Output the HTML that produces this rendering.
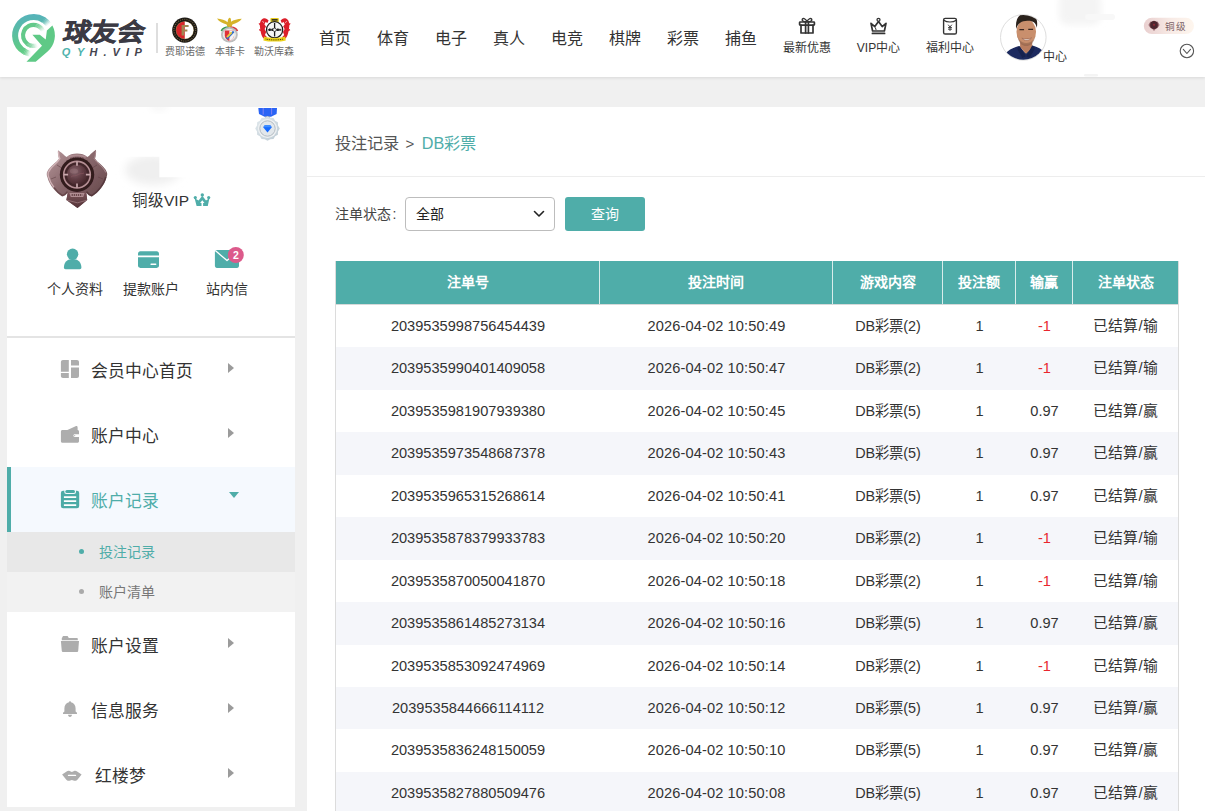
<!DOCTYPE html>
<html lang="zh-CN">
<head>
<meta charset="utf-8">
<title>投注记录</title>
<style>
*{box-sizing:border-box;margin:0;padding:0}
html,body{width:1205px;height:811px;overflow:hidden}
body{background:#f0f0f0;font-family:"Liberation Sans",sans-serif;color:#333;position:relative}
.abs{position:absolute}
.t{position:absolute;white-space:nowrap;line-height:1}
/* header */
#hdr{position:absolute;left:0;top:0;width:1205px;height:77px;background:#fff;box-shadow:0 1px 3px rgba(0,0,0,.10)}
.nav{position:absolute;top:28.5px;font-size:16px;line-height:20px;color:#333;white-space:nowrap;width:34px;text-align:center}
.hl{position:absolute;top:41px;font-size:12px;line-height:14px;color:#333;white-space:nowrap;width:80px;text-align:center}
.club{position:absolute;top:45.5px;font-size:10px;line-height:12px;color:#6a6a6a;white-space:nowrap;text-align:center;width:50px}
/* sidebar */
#side{position:absolute;left:7px;top:107px;width:288px;height:700px;background:#fff}
.q{position:absolute;top:173px;width:76px;text-align:center;font-size:14px;line-height:18px;color:#333;white-space:nowrap}
.mi{position:absolute;left:0;width:288px;height:65px}
.mi .lb{position:absolute;left:84px;top:23.5px;font-size:16.8px;line-height:22px;color:#333;white-space:nowrap}
.mi .ic{position:absolute;left:54px;top:23px;width:18px;height:18px}
.mi .ar{position:absolute;left:221px;top:25.5px;width:0;height:0;border-left:6.5px solid #9b9b9b;border-top:5.5px solid transparent;border-bottom:5.5px solid transparent}
.sub{position:absolute;left:0;width:288px;height:40px}
.sub .dot{position:absolute;left:72px;top:17px;width:5px;height:5px;border-radius:50%}
.sub .lb{position:absolute;left:91.5px;top:10.5px;font-size:14px;line-height:18px;white-space:nowrap}
/* main */
#main{position:absolute;left:307px;top:107px;width:898px;height:704px;background:#fff}
#tbl{position:absolute;left:28px;top:154px;width:844px;border-left:1px solid #dcdcdc;border-right:1px solid #dcdcdc}
.hr{height:44px;background:#4fada9;display:flex;border-bottom:1px solid #d6d9d9}
.hr div{color:#fff;font-weight:bold;font-size:14px;line-height:43px;text-align:center;border-right:1px solid #d9eceb}
.hr div:last-child{border-right:none}
.r{height:42.45px;display:flex;background:#fff}
.r.a{background:#f5f6fa}
.r div{font-size:14.6px;line-height:42.1px;text-align:center;color:#333;white-space:nowrap}
.c1{width:264px}.c2{width:233px}.c3{width:110px}.c4{width:73px}.c5{width:57px}.c6{width:105px}
.r .c2{letter-spacing:.12px}.r .c3{font-size:14.4px}.r .c6{font-size:14.8px}
.r .neg{color:#e8262d}
</style>
</head>
<body>
<!-- HEADER -->
<div id="hdr">
  <svg class="abs" style="left:0;top:0" width="1205" height="77" viewBox="0 0 1205 77">
  <defs>
    <linearGradient id="gRing" gradientUnits="userSpaceOnUse" x1="0" y1="15" x2="0" y2="50"><stop offset="0" stop-color="#56b3b9"/><stop offset=".5" stop-color="#5abda2"/><stop offset="1" stop-color="#60cb86"/></linearGradient>
    <linearGradient id="gPill" x1="0" y1="0" x2="1" y2="0"><stop offset="0" stop-color="#e9cfcf"/><stop offset=".55" stop-color="#f8ebe6"/><stop offset="1" stop-color="#fef6ee"/></linearGradient>
    <clipPath id="cAv"><circle cx="1023.3" cy="37.4" r="22.4"/></clipPath>
    <clipPath id="cF"><circle cx="184.8" cy="30.2" r="8.6"/></clipPath>
    <filter id="bl3" x="-50%" y="-50%" width="200%" height="200%"><feGaussianBlur stdDeviation="3"/></filter>
    <filter id="bl1" x="-50%" y="-50%" width="200%" height="200%"><feGaussianBlur stdDeviation=".6"/></filter>
  </defs>
  <!-- logo mark -->
  <g>
    <g fill="none" stroke="url(#gRing)" stroke-width="6"><path d="M43.58 19.88 A18.5 18.5 0 1 0 23.70 51.09"/><path d="M48.33 24.34 A18.5 18.5 0 0 0 47.40 23.19" stroke-opacity="0.15"/><path d="M47.53 23.34 A18.5 18.5 0 0 0 46.51 22.25" stroke-opacity="0.35"/><path d="M46.65 22.39 A18.5 18.5 0 0 0 45.56 21.37" stroke-opacity="0.59"/><path d="M45.71 21.50 A18.5 18.5 0 0 0 44.56 20.57" stroke-opacity="0.81"/><path d="M44.71 20.68 A18.5 18.5 0 0 0 43.49 19.83" stroke-opacity="0.96"/><path d="M43.66 19.94 A18.5 18.5 0 0 0 43.22 19.66" stroke-opacity="1.00"/><path d="M23.34 50.86 A18.5 18.5 0 0 0 24.62 51.63" stroke-opacity="0.98"/><path d="M24.45 51.53 A18.5 18.5 0 0 0 25.77 52.21" stroke-opacity="0.86"/><path d="M25.59 52.13 A18.5 18.5 0 0 0 26.96 52.71" stroke-opacity="0.67"/><path d="M26.78 52.64 A18.5 18.5 0 0 0 28.18 53.12" stroke-opacity="0.44"/><path d="M28.00 53.06 A18.5 18.5 0 0 0 29.43 53.45" stroke-opacity="0.23"/><path d="M29.24 53.40 A18.5 18.5 0 0 0 30.70 53.69" stroke-opacity="0.06"/></g>
    <g fill="none" stroke="#62c98a" stroke-width="4.2"><path d="M35.86 25.17 A10.5 10.5 0 0 0 27.33 43.89"/><path d="M42.96 30.85 A10.5 10.5 0 0 0 42.57 30.10" stroke-opacity="0.07"/><path d="M42.62 30.20 A10.5 10.5 0 0 0 42.17 29.48" stroke-opacity="0.14"/><path d="M42.24 29.57 A10.5 10.5 0 0 0 41.74 28.89" stroke-opacity="0.22"/><path d="M41.81 28.98 A10.5 10.5 0 0 0 41.27 28.33" stroke-opacity="0.30"/><path d="M41.34 28.42 A10.5 10.5 0 0 0 40.75 27.81" stroke-opacity="0.40"/><path d="M40.83 27.89 A10.5 10.5 0 0 0 40.21 27.32" stroke-opacity="0.50"/><path d="M40.29 27.39 A10.5 10.5 0 0 0 39.63 26.87" stroke-opacity="0.60"/><path d="M39.72 26.94 A10.5 10.5 0 0 0 39.02 26.47" stroke-opacity="0.70"/><path d="M39.11 26.52 A10.5 10.5 0 0 0 38.38 26.10" stroke-opacity="0.78"/><path d="M38.48 26.15 A10.5 10.5 0 0 0 37.72 25.79" stroke-opacity="0.86"/><path d="M37.82 25.83 A10.5 10.5 0 0 0 37.04 25.51" stroke-opacity="0.93"/><path d="M37.14 25.55 A10.5 10.5 0 0 0 36.34 25.29" stroke-opacity="0.97"/><path d="M36.45 25.32 A10.5 10.5 0 0 0 35.63 25.12" stroke-opacity="1.00"/><path d="M27.14 43.75 A10.5 10.5 0 0 0 27.83 44.24" stroke-opacity="1.00"/><path d="M27.74 44.18 A10.5 10.5 0 0 0 28.46 44.61" stroke-opacity="0.98"/><path d="M28.36 44.56 A10.5 10.5 0 0 0 29.11 44.94" stroke-opacity="0.93"/><path d="M29.01 44.89 A10.5 10.5 0 0 0 29.79 45.22" stroke-opacity="0.88"/><path d="M29.69 45.18 A10.5 10.5 0 0 0 30.48 45.46" stroke-opacity="0.81"/><path d="M30.38 45.42 A10.5 10.5 0 0 0 31.19 45.64" stroke-opacity="0.73"/><path d="M31.08 45.62 A10.5 10.5 0 0 0 31.91 45.78" stroke-opacity="0.64"/><path d="M31.80 45.76 A10.5 10.5 0 0 0 32.64 45.86" stroke-opacity="0.55"/><path d="M32.53 45.86 A10.5 10.5 0 0 0 33.37 45.90" stroke-opacity="0.45"/><path d="M33.26 45.90 A10.5 10.5 0 0 0 34.10 45.88" stroke-opacity="0.36"/><path d="M33.99 45.89 A10.5 10.5 0 0 0 34.83 45.81" stroke-opacity="0.27"/><path d="M34.73 45.83 A10.5 10.5 0 0 0 35.56 45.70" stroke-opacity="0.19"/><path d="M35.45 45.72 A10.5 10.5 0 0 0 36.27 45.53" stroke-opacity="0.12"/><path d="M36.16 45.56 A10.5 10.5 0 0 0 36.97 45.31" stroke-opacity="0.07"/></g>
    <path d="M52.4 25.4 L46.9 30.4 L45.7 39.6 L39.8 34.8 L32.4 34.8 L42 45.7 L26.5 61.7 L35.7 61.7 L47.6 51.6 A21.5 21.5 0 0 0 52.4 25.4 Z" fill="#5fc986"/>
  </g>
  <!-- word mark -->
  <g transform="translate(62 0) skewX(-12)">
    <text x="8.6" y="41" font-family="Liberation Sans, sans-serif" font-weight="900" font-size="25" fill="#3b3a44" stroke="#3b3a44" stroke-width=".55" textLength="80.5" lengthAdjust="spacingAndGlyphs">球友会</text>
  </g>
  <g font-family="Liberation Sans, sans-serif" font-weight="bold" font-style="italic" font-size="11" fill="#45444f">
    <text x="61.8" y="56" fill="#4fb3ad">Q</text><text x="77" y="56" fill="#4fb3ad">Y</text><text x="89.4" y="56">H</text><text x="103.6" y="56">.</text><text x="112.6" y="56">V</text><text x="126" y="56">I</text><text x="134.4" y="56">P</text>
  </g>
  <!-- club 1 -->
  <g>
    <circle cx="184.8" cy="30.2" r="12.6" fill="#1b1814"/>
    <circle cx="184.8" cy="30.2" r="10.9" fill="none" stroke="#8f7a4c" stroke-width="1.3" stroke-dasharray=".9 1.3" opacity=".75"/>
    <circle cx="184.8" cy="30.2" r="9" fill="#9c8856"/>
    <g clip-path="url(#cF)"><rect x="175" y="20" width="9.8" height="21" fill="#d8262b"/><rect x="184.8" y="20" width="10" height="21" fill="#fff"/></g>
    <path d="M181.6 25 H188.6 V27 H184 V29.6 H187.4 V31.4 H184 V35.6 H181.6 Z" fill="#a08652"/>
  </g>
  <!-- club 2 -->
  <g>
    <path d="M217 18.6 C221 19 225.5 20 227.6 22.2 C227.8 20 228.4 18.2 229.6 17.8 C230.8 18 231.2 19.4 231 21.8 C233.4 20 237.6 19 241.8 18.8 C240 21.6 236 23.4 232.4 24.6 L231.4 27.2 L227.6 27.2 L226.6 24.6 C223 23.6 219 21.8 217 18.6 Z" fill="#d6b32a"/>
    <path d="M220.6 30.4 C223 26.6 227 25.8 229.4 27.2 L229.4 29.4 C226.6 28.6 223.6 29.6 222 31.6 Z" fill="#2f9a4c"/>
    <path d="M238.2 30.4 C235.8 26.6 231.8 25.8 229.4 27.2 L229.4 29.4 C232.2 28.6 235.2 29.6 236.8 31.6 Z" fill="#d9333a"/>
    <ellipse cx="229.4" cy="34.8" rx="8.4" ry="7.8" fill="#bdbdbd"/>
    <ellipse cx="229.4" cy="34.8" rx="6.6" ry="6.1" fill="#e9e9e9"/>
    <path d="M224.8 30.6 H234 V35.6 C234 38.6 231.6 40.2 229.4 41 C227.2 40.2 224.8 38.6 224.8 35.6 Z" fill="#e03038"/>
    <path d="M229.4 30.6 H234 V35.6 C234 38.6 231.6 40.2 229.4 41 Z" fill="#f4f4f4"/>
    <path d="M233 30.8 L234.4 32.2 L227.4 39.4 L226 38 Z" fill="#2a6ad0"/>
    <path d="M231 31.6 L232.4 33 L227.6 37.8 L226.4 36.6 Z" fill="#ecc83a"/>
  </g>
  <!-- club 3 -->
  <g>
    <path d="M260 27 C259.4 23 260.6 19.4 263.2 18.4 C265.4 17.8 267.4 18.8 268.6 20.6 L267.4 23 L265.6 22 L264.4 24.2 L266 26.4 L264.6 29 L266.2 32 L265 35 L267.4 37.6 L263.6 38.4 C261.6 36.4 260.4 31.6 260 27 Z" fill="#dc1f2b"/>
    <path d="M289.2 27 C289.8 23 288.6 19.4 286 18.4 C283.8 17.8 281.8 18.8 280.6 20.6 L281.8 23 L283.6 22 L284.8 24.2 L283.2 26.4 L284.6 29 L283 32 L284.2 35 L281.8 37.6 L285.6 38.4 C287.6 36.4 288.8 31.6 289.2 27 Z" fill="#dc1f2b"/>
    <path d="M259 23.4 L261.4 25.8 M259.2 29.6 L261.6 30.6 M290.2 23.4 L287.8 25.8 M290 29.6 L287.6 30.6" stroke="#dc1f2b" stroke-width="1.2"/>
    <path d="M262.4 21.4 L264 22.6 M286.8 21.4 L285.2 22.6" stroke="#fff" stroke-width=".7"/>
    <rect x="270.4" y="18" width="8.4" height="4" rx=".8" fill="#e8cd1e"/>
    <rect x="271.6" y="19.1" width="6" height="1.5" fill="#2a2a2a"/>
    <circle cx="274.6" cy="29.8" r="8.7" fill="#1b1b1b"/>
    <circle cx="274.6" cy="29.8" r="7.5" fill="#f6f6f6"/>
    <path d="M274.6 23 V36.6 M267.8 29.8 H281.4" stroke="#1b1b1b" stroke-width="1.3"/>
    <path d="M269 29.8 H280.2" stroke="#1b1b1b" stroke-width="2.6" stroke-dasharray="1.6 1.1"/>
    <circle cx="274.6" cy="29.8" r="1.7" fill="#f6f6f6" stroke="#1b1b1b" stroke-width=".7"/>
    <path d="M264 36.6 C268 38.4 281.2 38.4 285.2 36.6 L285.8 40.4 C281 42 268.2 42 263.4 40.4 Z" fill="#ecd21c"/>
    <path d="M265.6 39 C270 40.2 279.2 40.2 283.6 39" stroke="#4a4208" stroke-width="1" fill="none" stroke-dasharray="1 .8"/>
  </g>
  <!-- gift -->
  <g fill="none" stroke="#333" stroke-width="1.7" stroke-linejoin="round" stroke-linecap="round">
    <rect x="799.6" y="22" width="14.8" height="3.2" rx=".6"/>
    <path d="M801 25.2 V33 H813 V25.2"/>
    <path d="M805.6 22 V33 M808.4 22 V33"/>
    <path d="M807 21.6 C805.4 18.2 802.6 17.8 802.2 19.6 C801.8 21.4 804.6 21.8 807 21.6 C809.4 21.8 812.2 21.4 811.8 19.6 C811.4 17.8 808.6 18.2 807 21.6 Z" stroke-width="1.4"/>
  </g>
  <!-- crown -->
  <g fill="none" stroke="#333" stroke-width="1.7" stroke-linejoin="round" stroke-linecap="round">
    <circle cx="878.5" cy="19.8" r="1.5" stroke-width="1.3"/>
    <path d="M871 23.4 L874.8 26.6 L878.5 21.6 L882.2 26.6 L886 23.4 L884.4 31 H872.6 Z"/>
    <path d="M872.4 33.4 H884.6" stroke-width="1.7"/>
    <path d="M875.4 27.8 L876 29.6" stroke-width="1"/>
  </g>
  <!-- red packet -->
  <g fill="none" stroke="#333" stroke-width="1.4" stroke-linejoin="round" stroke-linecap="round">
    <rect x="943.6" y="18.4" width="12.8" height="15.6" rx="1.6"/>
    <path d="M943.8 20.2 C947 22.6 953 22.6 956.2 20.2" stroke-width="1.2"/>
    <path d="M948.4 25 L950 27 L951.6 25 M950 27 V30.6 M948.4 27.6 H951.6 M948.4 29.2 H951.6" stroke-width=".9"/>
  </g>
  <!-- blurred name blob -->
  <rect x="1059" y="-8" width="42" height="33" rx="9" fill="#f4f4f4" filter="url(#bl3)"/><rect x="1085" y="14" width="30" height="6" rx="3" fill="#f8f8f8" filter="url(#bl1)"/>
  <rect x="1084" y="74" width="14" height="2.5" rx="1.2" fill="#f4f4f4" filter="url(#bl1)"/>
  <!-- avatar -->
  <g>
    <circle cx="1023.3" cy="37.4" r="22.8" fill="#fff" stroke="#dedede" stroke-width="1"/>
    <g clip-path="url(#cAv)" filter="url(#bl1)"><g transform="translate(1025.6 38.4) scale(1.1) translate(-1025 -37.6)">
      <path d="M1002 66 C1003 52 1009 47.4 1019 44.6 L1025 51 L1031 44 C1040 46.4 1046 51 1048 66 Z" fill="#1f2c5e"/>
      <path d="M1020 38 H1031 V46 L1025.4 51.5 L1020 45.6 Z" fill="#b97d5e"/>
      <path d="M1019.6 44.4 L1025.4 54 L1022 55.4 L1017.2 47 Z M1031 44 L1025.4 54 L1028.8 55.4 L1033.6 46.6 Z" fill="#182350"/>
      <ellipse cx="1025.6" cy="31.6" rx="8.9" ry="11.4" fill="#c98f6d"/>
      <path d="M1016.4 29 C1015.4 20 1019 14.4 1026.4 14.4 C1033.6 14.4 1036.6 19.4 1035.2 28 C1034.4 23.6 1032 21.4 1026.6 21.6 C1021.4 21.8 1018 23.6 1016.4 29 Z" fill="#2b211d"/>
      <path d="M1019.4 29.6 H1023.6 M1027.4 29.4 H1031.8" stroke="#3a2820" stroke-width="1.1"/>
      <path d="M1021.6 37.4 C1024 40 1028 40 1030.4 37.2 C1028 38.2 1024 38.4 1021.6 37.4 Z" fill="#f3ebe6" stroke="#8d5540" stroke-width=".5"/>
      <path d="M1017.4 34 C1018 41 1021.4 44.4 1025.6 44.6 C1029.8 44.4 1033.2 41 1034 34 C1033.4 38.6 1030.6 41.6 1025.6 41.8 C1020.8 41.6 1018.2 38.6 1017.4 34 Z" fill="#8b5e49" opacity=".55"/>
    </g></g>
  </g>
  <!-- level pill -->
  <rect x="1143.8" y="17.8" width="50.2" height="16.3" rx="8.15" fill="url(#gPill)"/>
  <g filter="url(#bl1)">
    <path d="M1148.4 25 L1150.4 21.6 L1152 22 L1154 20.6 L1156 22 L1157.6 21.6 L1159.6 25 L1157.6 28 L1156 28.6 L1154 31 L1152 28.6 L1150.4 28 Z" fill="#9c6e75"/>
    <circle cx="1154" cy="25" r="3.9" fill="#4e262d"/>
    <circle cx="1154" cy="24.8" r="1.1" fill="#8c2a36"/>
  </g>
  <text x="1165.2" y="29.6" font-family="Liberation Sans, sans-serif" font-size="9.6" fill="#7a6064" letter-spacing=".9">铜级</text>
  <!-- chevron circle -->
  <circle cx="1186.9" cy="51" r="6.7" fill="none" stroke="#555" stroke-width="1.1"/>
  <path d="M1183.3 49.4 L1186.9 53.5 L1190.5 49.4" fill="none" stroke="#555" stroke-width="1.1" stroke-linecap="round" stroke-linejoin="round"/>
</svg>
  <div class="abs" style="left:156px;top:23px;width:1.5px;height:30px;background:#dedede"></div>
  <div class="club" style="left:160px">费耶诺德</div>
  <div class="club" style="left:204.5px">本菲卡</div>
  <div class="club" style="left:249px">勒沃库森</div>

  <div class="nav" style="left:318px">首页</div>
  <div class="nav" style="left:376px">体育</div>
  <div class="nav" style="left:434px">电子</div>
  <div class="nav" style="left:492px">真人</div>
  <div class="nav" style="left:550px">电竞</div>
  <div class="nav" style="left:608px">棋牌</div>
  <div class="nav" style="left:666px">彩票</div>
  <div class="nav" style="left:724px">捕鱼</div>

  <div class="hl" style="left:767px">最新优惠</div>
  <div class="hl" style="left:838.5px">VIP中心</div>
  <div class="hl" style="left:910px">福利中心</div>

  <div class="t" style="left:1043px;top:50.5px;font-size:12px;color:#333">中心</div>
</div>

<!-- SIDEBAR -->
<div id="side">
  <div class="t" style="left:125px;top:84.5px;font-size:15.5px;line-height:18px;color:#333">铜级VIP</div>
  <div class="q" style="left:30px">个人资料</div>
  <div class="q" style="left:106px">提款账户</div>
  <div class="q" style="left:182px">站内信</div>
  <div class="abs" style="left:0;top:229px;width:288px;height:1.5px;background:#e4e4e4"></div>

  <div class="mi" style="top:230px"><div class="lb">会员中心首页</div><div class="ar"></div></div>
  <div class="mi" style="top:295px"><div class="lb">账户中心</div><div class="ar"></div></div>
  <div class="mi" style="top:360px;background:#f5f9fe"><div class="abs" style="left:0;top:0;width:4px;height:65px;background:#4fada9"></div><div class="lb" style="color:#4fada9">账户记录</div>
    <div class="abs" style="left:221.5px;top:25px;width:0;height:0;border-top:6px solid #4fada9;border-left:5.5px solid transparent;border-right:5.5px solid transparent"></div></div>
  <div class="sub" style="top:425px;background:#e8e8e8"><div class="dot" style="background:#4fada9"></div><div class="lb" style="color:#4fada9">投注记录</div></div>
  <div class="sub" style="top:465px;background:#f2f2f2"><div class="dot" style="background:#aaa"></div><div class="lb" style="color:#777">账户清单</div></div>
  <div class="mi" style="top:505px"><div class="lb">账户设置</div><div class="ar"></div></div>
  <div class="mi" style="top:570px"><div class="lb">信息服务</div><div class="ar"></div></div>
  <div class="mi" style="top:635px"><div class="lb" style="left:88px">红楼梦</div><div class="ar"></div></div>
<svg class="abs" style="left:0;top:0" width="288" height="700" viewBox="0 0 288 700">
  <defs>
    <linearGradient id="gEm" x1="0" y1="0" x2="1" y2="1"><stop offset="0" stop-color="#bb9ca0"/><stop offset=".4" stop-color="#8b6a6e"/><stop offset="1" stop-color="#5d3f43"/></linearGradient>
    <linearGradient id="gEm2" x1="0" y1="0" x2="0" y2="1"><stop offset="0" stop-color="#7a5258"/><stop offset="1" stop-color="#523237"/></linearGradient>
    <radialGradient id="gOrb" cx=".4" cy=".35" r=".7"><stop offset="0" stop-color="#84626a"/><stop offset=".55" stop-color="#613d44"/><stop offset="1" stop-color="#45262b"/></radialGradient>
    <linearGradient id="gMed" x1="0" y1="0" x2="1" y2="1"><stop offset="0" stop-color="#e3eaee"/><stop offset="1" stop-color="#bccad3"/></linearGradient>
    <filter id="sb4" x="-50%" y="-50%" width="200%" height="200%"><feGaussianBlur stdDeviation="4"/></filter>
    <filter id="sb05" x="-20%" y="-20%" width="140%" height="140%"><feGaussianBlur stdDeviation=".45"/></filter>
  </defs>
  <!-- blurred name -->
  <clipPath id="cBlob"><path d="M100 49.8 H152.3 V70.2 H195 V95 H100 Z"/></clipPath>
  <g clip-path="url(#cBlob)"><ellipse cx="146" cy="63" rx="28" ry="15" fill="#efefef" filter="url(#sb4)"/></g>
  <rect x="144" y="-5" width="16" height="8" rx="4" fill="#f5f5f5" filter="url(#sb4)"/>
  <!-- medal -->
  <g>
    <path d="M251.3 1 H270 L269.6 7 L264 9.8 H257.6 L252 7 Z" fill="#2a64f5"/>
    <path d="M256.2 1 V7.6 M264.6 1 V7.6" stroke="#8a86f2" stroke-width=".9"/>
    <rect x="258.2" y="9.4" width="4.6" height="1.6" fill="#9aa0a6"/>
    <path id="st" d="M260.5 9.2 L263.3 10.8 L266.5 10.9 L268.1 13.7 L270.9 15.3 L271 18.5 L272.8 21.5 L271 24.5 L270.9 27.7 L268.1 29.3 L266.5 32.1 L263.3 32.2 L260.5 33.8 L257.7 32.2 L254.5 32.1 L252.9 29.3 L250.1 27.7 L250 24.5 L248.2 21.5 L250 18.5 L250.1 15.3 L252.9 13.7 L254.5 10.9 L257.7 10.8 Z" fill="url(#gMed)"/>
    <circle cx="260.5" cy="21.5" r="9.6" fill="#eef1f3"/>
    <circle cx="260.5" cy="21.5" r="7.7" fill="#e2e7eb" stroke="#b4bcc3" stroke-width="1"/>
    <path d="M258 18 H263 L264.8 20.2 L260.5 25.4 L256.2 20.2 Z" fill="#166aff"/>
    <path d="M258 18 H263 L264.8 20.2 H256.2 Z" fill="#3f8dff"/>
  </g>
  <!-- bronze emblem -->
  <g filter="url(#sb05)">
    <path d="M51 43.2 C53.2 44.6 56 46.4 57.8 48.8 L59.6 50 C62 47.6 66 46.5 70 46.5 C74 46.5 78 47.6 80.4 50 L82.2 48.8 C84 46.4 86.8 44.4 89 42.7 C89.4 46 88.8 49.4 88 51.4 C89.4 53.4 90.8 55 92.2 56.1 C95.6 59 98.6 62 100 65.4 C100.4 67 100.2 68.6 99.6 70 C98.6 74.4 96.4 78 94 81.1 C91.4 84.6 88.2 87.6 84.8 89.4 C82.6 89 80.6 87.6 79.3 85.7 L80.2 93.1 L70.5 101 L59.4 93.1 L60.7 85.7 C59.4 87.6 57.4 89 55.2 89.4 C51.8 87.6 48.6 84.6 46 81.1 C43.6 78 41.4 74.4 40.4 70 C39.8 68.6 39.6 67 39.9 65.4 C41.4 62 44.4 59 47.8 56.1 C49.2 55 50.6 53.4 52 51.4 C51.2 49.4 50.6 46 51 43.2 Z" fill="url(#gEm)"/>
    <path d="M51.5 44.6 C51.4 47.6 52 50 52.8 51.6 C51.6 53.6 50 55.4 48.4 56.8 C45.2 59.4 42.6 62.4 41.2 65.6 C40.8 67.4 41.2 69 41.8 70.4 C42.8 74 44.6 77.4 47 80.4" fill="none" stroke="#d9bcc0" stroke-width="1.3" opacity=".85"/>
    <path d="M88.5 44.4 C88.6 47.6 88 50 87.2 51.6 C88.4 53.6 90 55.4 91.6 56.8 C94.8 59.4 97.4 62.4 98.8 65.6" fill="none" stroke="#b99a9e" stroke-width="1" opacity=".7"/>
    <path d="M98.8 70 C97.6 74.6 95.6 78 93.4 80.8 C91 84 88 86.8 84.8 88.6 C83 88 81 86.6 79.6 84.6" fill="none" stroke="#4f3135" stroke-width="1.6" opacity=".75"/>
    <path d="M47 80.6 C49.4 83.8 52.2 86.6 55.2 88.4 C57 88 59 86.6 60.4 84.6" fill="none" stroke="#5a3a3e" stroke-width="1.4" opacity=".7"/>
    <path d="M44 72 L49 70 M96 72 L91 70 M50 58 L54 60.5 M90 58 L86 60.5" stroke="#5f4044" stroke-width="1" opacity=".55"/>
    <path d="M59.4 93.1 L60.7 85.7 H79.3 L80.2 93.1 L70.5 101 Z" fill="url(#gEm2)"/>
    <path d="M60 93.2 L70.5 95.8 L80 93.2" fill="none" stroke="#a8868a" stroke-width=".9" opacity=".7"/>
    <path d="M62.4 85.9 H77.6 L76.2 90 H63.8 Z" fill="#b08d92"/>
    <path d="M64.6 88 H75.4" stroke="#553539" stroke-width="1.7" stroke-dasharray="1.3 .8"/>
    <path d="M61.2 50.2 C65 47.8 75 47.8 78.8 50.2" fill="none" stroke="#ad8b90" stroke-width="1.8"/>
    <path d="M63 51.6 C66.4 49.8 73.6 49.8 77 51.6" fill="none" stroke="#5a3b3f" stroke-width="1" stroke-dasharray="1 .7" opacity=".8"/>
    <circle cx="70" cy="67.7" r="17.2" fill="#331a1e"/>
    <circle cx="70" cy="67.7" r="13.3" fill="#43262b" stroke="#b58f94" stroke-width="1.6"/>
    <circle cx="70" cy="67.7" r="10.2" fill="url(#gOrb)"/>
    <path d="M70 54.6 V58.8 M70 76.6 V80.8 M56.9 67.7 H61.1 M78.9 67.7 H83.1" stroke="#c9a9ad" stroke-width="1.7"/>
    <ellipse cx="67" cy="64" rx="4.2" ry="2.6" fill="#a07c81" opacity=".4"/>
    <path d="M64 70 C66 68 69 69.6 71.6 67.4 C73.6 66 75.6 67 77 66" fill="none" stroke="#8d5a63" stroke-width=".9" opacity=".6"/>
  </g>
  <!-- teal crown -->
  <g fill="#4fada9">
    <circle cx="188.3" cy="90.6" r="1.6"/><circle cx="195.3" cy="87.9" r="1.7"/><circle cx="201.7" cy="90.6" r="1.6"/>
    <path d="M187.6 91.2 L191.6 93.6 L195.3 88.8 L199 93.6 L202.4 91.2 L200.8 98.9 H189.6 Z"/>
    <path d="M195.3 93.2 L197.5 95.9 H196.1 V98.9 H194.5 V95.9 H193.1 Z" fill="#fff"/>
  </g>
  <!-- person -->
  <g fill="#4fada9">
    <circle cx="65.6" cy="147.2" r="5.7"/>
    <path d="M56.9 160.6 C56.9 155.2 60.4 151.9 65.6 151.9 C70.8 151.9 74.4 155.2 74.4 160.6 C74.4 161.6 73.7 162.3 72.7 162.3 H58.6 C57.6 162.3 56.9 161.6 56.9 160.6 Z"/>
  </g>
  <!-- card -->
  <g fill="#4fada9">
    <path d="M131 148.4 V146.6 C131 145.3 132 144.3 133.3 144.3 H149.7 C151 144.3 152 145.3 152 146.6 V148.4 Z"/>
    <path d="M131 150.3 H152 V158.6 C152 159.9 151 160.9 149.7 160.9 H133.3 C132 160.9 131 159.9 131 158.6 Z"/>
    <rect x="143.4" y="156.6" width="6" height="1.4" rx=".7" fill="#fff"/>
  </g>
  <!-- envelope -->
  <g>
    <rect x="207.9" y="143" width="24.1" height="17.9" rx="1.8" fill="#4fada9"/>
    <path d="M208.3 143.6 L220 153.6 L231.7 143.6" fill="none" stroke="#fff" stroke-width="1.3" stroke-linejoin="round"/>
    <circle cx="228.8" cy="148" r="8" fill="#dc5a8b"/>
    <text x="228.8" y="151.8" text-anchor="middle" font-family="Liberation Sans, sans-serif" font-weight="bold" font-size="10.5" fill="#fff">2</text>
  </g>
  <!-- grid icon -->
  <g fill="#adadad">
    <path d="M55.9 252.9 H61.8 V264.7 H53.9 V254.9 C53.9 253.8 54.8 252.9 55.9 252.9 Z"/>
    <path d="M53.9 266 H61.8 V271.1 H55.9 C54.8 271.1 53.9 270.2 53.9 269.1 Z"/>
    <path d="M64 252.9 H70 C71.1 252.9 72 253.8 72 254.9 V258.6 H64 Z"/>
    <path d="M64 260.4 H72 V269.1 C72 270.2 71.1 271.1 70 271.1 H64 Z"/>
  </g>
  <!-- wallet -->
  <g fill="#adadad">
    <path d="M55.4 322.9 H70.5 C71.3 322.9 72 323.6 72 324.4 V327.2 H67.6 C66.9 327.2 66.4 327.8 66.4 328.5 C66.4 329.3 66.9 329.9 67.6 329.9 H72 V334.2 C72 335 71.3 335.7 70.5 335.7 H55.4 C54.6 335.7 53.9 335 53.9 334.2 V324.4 C53.9 323.6 54.6 322.9 55.4 322.9 Z"/>
    <path d="M60.4 322.9 L68.6 319.2 C69.6 318.8 70.6 319.4 70.6 320.4 V322.9 Z"/>
    <circle cx="67.7" cy="328.55" r=".6"/>
  </g>
  <!-- clipboard -->
  <g>
    <rect x="53.9" y="383.85" width="18.3" height="17.3" rx="2.2" fill="#4caba6"/>
    <rect x="57.3" y="382.1" width="11.7" height="4.8" rx="2" fill="#f5f9fe"/>
    <rect x="58.3" y="382.9" width="9.7" height="3.2" rx="1.5" fill="#4caba6"/>
    <path d="M56.9 390.15 H69.2 M56.9 394.1 H69.2 M56.9 398.05 H69.2" stroke="#fff" stroke-width="1.75"/>
  </g>
  <!-- folder -->
  <g fill="#adadad">
    <path d="M55.6 529.9 C55.6 529.3 56 528.9 56.6 528.9 H60.6 L61.8 531 H69.8 C70.4 531 70.8 531.4 70.8 532 V533.3 H54.8 V531 Z"/>
    <path d="M53.9 533.9 H72 L71.2 544 C71.1 544.6 70.7 544.9 70.2 544.9 H55.8 C55.3 544.9 54.9 544.6 54.8 544 Z"/>
  </g>
  <!-- bell -->
  <g fill="#adadad">
    <path d="M63 594.2 C63.7 594.2 64 594.7 64 595.3 C67 596 68.6 598.4 68.6 601.6 V604.4 L70 605.8 V607 H56 V605.8 L57.4 604.4 V601.6 C57.4 598.4 59 596 62 595.3 C62 594.7 62.3 594.2 63 594.2 Z"/>
    <path d="M61 607.8 H65 C65 609 64.1 609.9 63 609.9 C61.9 609.9 61 609 61 607.8 Z"/>
  </g>
  <!-- lips -->
  <g>
    <path d="M55.1 667.5 L59.6 664.6 C60.4 663.9 61.6 663.6 62.6 664 L64.85 665 L67.1 664 C68.1 663.6 69.3 663.9 70.1 664.6 L74.6 667.5 L70.6 672.6 C69.8 673.6 68.4 674.1 67.2 673.7 L64.85 673 L62.5 673.7 C61.3 674.1 59.9 673.6 59.1 672.6 Z" fill="#adadad"/>
    <rect x="60.8" y="667.7" width="8.4" height="1.4" rx=".7" fill="#fff"/>
  </g>
</svg>
</div>

<!-- MAIN -->
<div id="main">
  <div class="t" style="left:28px;top:25.5px;font-size:16.2px;line-height:20px;color:#555">投注记录 <span style="font-size:15px;margin:0 3px 0 2px">&gt;</span> <span style="color:#4fada9">DB彩票</span></div>
  <div class="abs" style="left:0;top:69px;width:898px;height:1px;background:#ededed"></div>
  <div class="t" style="left:28px;top:98px;font-size:14px;line-height:18px;color:#444">注单状态<span style="margin-left:1.5px">:</span></div>
  <div class="abs" style="left:98px;top:90px;width:150px;height:34px;border:1px solid #bdbdbd;border-radius:4px;background:#fff">
    <div class="t" style="left:10px;top:7px;font-size:14px;line-height:18px;color:#222">全部</div>
    <svg class="abs" style="left:127px;top:12px" width="12" height="8" viewBox="0 0 12 8"><path d="M1.5 1.5 L6 6 L10.5 1.5" fill="none" stroke="#222" stroke-width="1.6" stroke-linecap="round" stroke-linejoin="round"/></svg>
  </div>
  <div class="abs" style="left:258px;top:90px;width:80px;height:34px;border-radius:3px;background:#4fada9;color:#fff;font-size:14px;line-height:34px;text-align:center">查询</div>

  <div id="tbl">
    <div class="hr"><div class="c1">注单号</div><div class="c2">投注时间</div><div class="c3">游戏内容</div><div class="c4">投注额</div><div class="c5">输赢</div><div class="c6">注单状态</div></div>
    <div class="r"><div class="c1">2039535998756454439</div><div class="c2">2026-04-02 10:50:49</div><div class="c3">DB彩票(2)</div><div class="c4">1</div><div class="c5 neg">-1</div><div class="c6">已结算/输</div></div>
    <div class="r a"><div class="c1">2039535990401409058</div><div class="c2">2026-04-02 10:50:47</div><div class="c3">DB彩票(2)</div><div class="c4">1</div><div class="c5 neg">-1</div><div class="c6">已结算/输</div></div>
    <div class="r"><div class="c1">2039535981907939380</div><div class="c2">2026-04-02 10:50:45</div><div class="c3">DB彩票(5)</div><div class="c4">1</div><div class="c5">0.97</div><div class="c6">已结算/赢</div></div>
    <div class="r a"><div class="c1">2039535973548687378</div><div class="c2">2026-04-02 10:50:43</div><div class="c3">DB彩票(5)</div><div class="c4">1</div><div class="c5">0.97</div><div class="c6">已结算/赢</div></div>
    <div class="r"><div class="c1">2039535965315268614</div><div class="c2">2026-04-02 10:50:41</div><div class="c3">DB彩票(5)</div><div class="c4">1</div><div class="c5">0.97</div><div class="c6">已结算/赢</div></div>
    <div class="r a"><div class="c1">2039535878379933783</div><div class="c2">2026-04-02 10:50:20</div><div class="c3">DB彩票(2)</div><div class="c4">1</div><div class="c5 neg">-1</div><div class="c6">已结算/输</div></div>
    <div class="r"><div class="c1">2039535870050041870</div><div class="c2">2026-04-02 10:50:18</div><div class="c3">DB彩票(2)</div><div class="c4">1</div><div class="c5 neg">-1</div><div class="c6">已结算/输</div></div>
    <div class="r a"><div class="c1">2039535861485273134</div><div class="c2">2026-04-02 10:50:16</div><div class="c3">DB彩票(5)</div><div class="c4">1</div><div class="c5">0.97</div><div class="c6">已结算/赢</div></div>
    <div class="r"><div class="c1">2039535853092474969</div><div class="c2">2026-04-02 10:50:14</div><div class="c3">DB彩票(2)</div><div class="c4">1</div><div class="c5 neg">-1</div><div class="c6">已结算/输</div></div>
    <div class="r a"><div class="c1">2039535844666114112</div><div class="c2">2026-04-02 10:50:12</div><div class="c3">DB彩票(5)</div><div class="c4">1</div><div class="c5">0.97</div><div class="c6">已结算/赢</div></div>
    <div class="r"><div class="c1">2039535836248150059</div><div class="c2">2026-04-02 10:50:10</div><div class="c3">DB彩票(5)</div><div class="c4">1</div><div class="c5">0.97</div><div class="c6">已结算/赢</div></div>
    <div class="r a"><div class="c1">2039535827880509476</div><div class="c2">2026-04-02 10:50:08</div><div class="c3">DB彩票(5)</div><div class="c4">1</div><div class="c5">0.97</div><div class="c6">已结算/赢</div></div>
  </div>
</div>
</body>
</html>
